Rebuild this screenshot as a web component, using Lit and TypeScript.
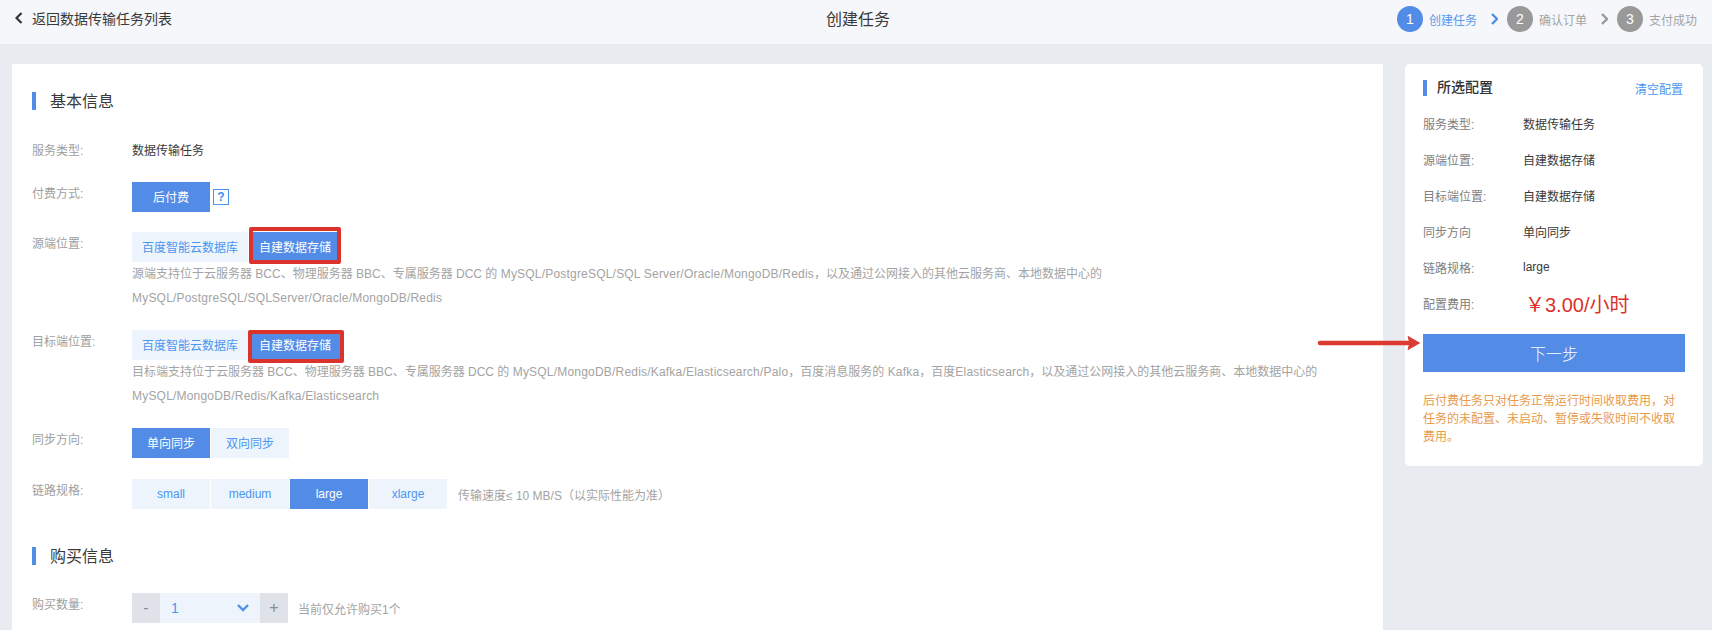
import { LitElement, html, css } from "lit";
import { customElement } from "lit/decorators.js";

@customElement("app-root")
export class AppRoot extends LitElement {
  static styles = css`
    :host { display: block; height: 100vh; overflow: hidden; background: #e8ebf0; color: #3a3a3a;
      font-family: "Liberation Sans", "Noto Sans CJK SC", sans-serif; font-size: 12px; font-weight: 400; }
    * { box-sizing: border-box; }
    .header { height: 44px; background: #f5f7fb; display: grid; grid-template-columns: 1fr auto 1fr; align-items: center; padding: 0 15px 0 15px; }
    .back { display: flex; align-items: center; gap: 9px; font-size: 14px; color: #3a3a3a; margin-top: -8px; }
    .page-title { font-size: 16px; color: #3a3a3a; margin-top: -8px; margin-left: 4px; }
    .steps { display: flex; align-items: center; justify-content: flex-end; margin-top: -6px; }
    .circle { width: 26px; height: 26px; border-radius: 50%; background: #999; color: #fff; font-size: 14px; display: flex; align-items: center; justify-content: center; margin-right: 6px; }
    .step { color: #a3a3a3; display: flex; align-items: center; }
    .step.on { color: #5a9ae8; }
    .step.on .circle { background: #528ce6; }
    .chev { margin: 0 9px 0 14px; display: block; }
    .main { display: flex; gap: 22px; padding: 20px 9px 0 12px; align-items: flex-start; }
    .left { width: 1371px; background: #fff; padding: 28px 20px 0; height: 700px; }
    .sec { display: flex; align-items: center; height: 18px; font-size: 16px; color: #3a3a3a; border-left: 4px solid #528ce6; padding: 0 0 2px 14px; }
    .sec.first { margin-bottom: 31px; }
    .sec.second { margin-top: 38px; margin-bottom: 28px; }
    .row { display: grid; grid-template-columns: 100px 1fr; margin-bottom: 20px; }
    .row.text { margin-bottom: 22px; padding-top: 1px; line-height: 18px; }
    .row.tight { margin-bottom: 21px; }
    .row.last { margin-bottom: 0; }
    .lab { color: #a0a0a0; line-height: 18px; padding-top: 3px; }
    .row.text .lab { padding-top: 0; }
    .ctl { display: flex; align-items: center; gap: 1px; }
    .opt { height: 30px; min-width: 78px; padding: 0 10px 1px; display: flex; align-items: center; justify-content: center; background: #edf4fc; color: #4b96ef; position: relative; }
    .opt.on { background: #528ce6; color: #fff; }
    .mark { position: absolute; border: 4px solid #dc322c; border-radius: 2px; }
    .mark.a { left: 0; right: 0; top: -5px; bottom: -2px; }
    .mark.b { left: -1px; right: -3px; top: 0; bottom: -3px; }
    .help { width: 16px; height: 16px; border: 1px solid #4b96ef; color: #3c8cf0; font-size: 12px; font-weight: 700; display: flex; align-items: center; justify-content: center; margin-left: 2px; }
    .desc { color: #a3a3a3; line-height: 24px; }
    .en { letter-spacing: 0.2px; }
    .hint { color: #a3a3a3; margin-left: 10px; }
    .qbtn { height: 30px; width: 28px; background: #dfe3e9; color: #8c8c8c; display: flex; align-items: center; justify-content: center; font-size: 16px; }
    .qsel { height: 30px; width: 100px; background: #edf4fc; color: #4b96ef; display: flex; align-items: center; justify-content: space-between; padding: 0 11px; font-size: 14px; }
    .qty { gap: 0; }
    .right { width: 298px; height: 402px; background: #fff; border-radius: 5px; padding: 16px 18px 0; position: relative; }
    .rhead { display: flex; justify-content: space-between; align-items: center; height: 16px; padding-right: 2px; }
    .rtitle { border-left: 4px solid #528ce6; padding: 0 0 2px 10px; font-size: 14px; font-weight: 500; color: #333; line-height: 14px; }
    .clear { color: #4b96ef; }
    .rrows { margin-top: 9px; }
    .rrow { display: grid; grid-template-columns: 100px 1fr; height: 36px; align-items: center; }
    .rlab { color: #808080; }
    .price { color: #dc322c; font-size: 20px; padding-left: 2px; }
    .next { margin-top: 13px; height: 38px; background: #528ce6; color: #fff; font-size: 16px; font-weight: 300; display: flex; align-items: center; justify-content: center; width: 262px; }
    .note { margin-top: 20px; color: #e89a4a; line-height: 18px; width: 262px; }
    .arrow { position: absolute; left: 1316px; top: 332px; display: block; }
  `;

  private opt(t: string, on = false, mark = "") {
    return html`<div class="opt ${on ? "on" : ""}">${t}${mark ? html`<span class="mark ${mark}"></span>` : ""}</div>`;
  }

  render() {
    const rows = [["服务类型:", "数据传输任务"], ["源端位置:", "自建数据存储"], ["目标端位置:", "自建数据存储"], ["同步方向", "单向同步"], ["链路规格:", "large"]];
    return html`
      <div class="header">
        <div class="back">
          <svg width="8" height="12" viewBox="0 0 8 12"><path d="M6.5 1 1.5 6l5 5" fill="none" stroke="#333" stroke-width="2.2"/></svg>
          <span>返回数据传输任务列表</span>
        </div>
        <div class="page-title">创建任务</div>
        <div class="steps">
          <div class="step on"><span class="circle">1</span>创建任务</div>
          <svg class="chev" width="7" height="12" viewBox="0 0 7 12"><path d="M1 1l5 5-5 5" fill="none" stroke="#4f8fe8" stroke-width="2.4"/></svg>
          <div class="step"><span class="circle">2</span>确认订单</div>
          <svg class="chev" width="7" height="12" viewBox="0 0 7 12"><path d="M1 1l5 5-5 5" fill="none" stroke="#999" stroke-width="2.4"/></svg>
          <div class="step"><span class="circle">3</span>支付成功</div>
        </div>
      </div>
      <div class="main">
        <div class="left">
          <div class="sec first">基本信息</div>
          <div class="row text"><div class="lab">服务类型:</div><div>数据传输任务</div></div>
          <div class="row"><div class="lab">付费方式:</div><div class="ctl">${this.opt("后付费", true)}<span class="help">?</span></div></div>
          <div class="row"><div class="lab">源端位置:</div><div>
            <div class="ctl">${this.opt("百度智能云数据库")}${this.opt("自建数据存储", true, "a")}</div>
            <div class="desc">源端支持位于云服务器 BCC、物理服务器 BBC、专属服务器 DCC 的 <span class="en">MySQL/PostgreSQL/SQL Server/Oracle/MongoDB/Redis</span>，以及通过公网接入的其他云服务商、本地数据中心的<br><span class="en">MySQL/PostgreSQL/SQLServer/Oracle/MongoDB/Redis</span></div>
          </div></div>
          <div class="row"><div class="lab">目标端位置:</div><div>
            <div class="ctl">${this.opt("百度智能云数据库")}${this.opt("自建数据存储", true, "b")}</div>
            <div class="desc">目标端支持位于云服务器 BCC、物理服务器 BBC、专属服务器 DCC 的 <span class="en">MySQL/MongoDB/Redis/Kafka/Elasticsearch/Palo</span>，百度消息服务的 <span class="en">Kafka</span>，百度<span class="en">Elasticsearch</span>，以及通过公网接入的其他云服务商、本地数据中心的<br><span class="en">MySQL/MongoDB/Redis/Kafka/Elasticsearch</span></div>
          </div></div>
          <div class="row tight"><div class="lab">同步方向:</div><div class="ctl">${this.opt("单向同步", true)}${this.opt("双向同步")}</div></div>
          <div class="row last"><div class="lab">链路规格:</div><div class="ctl">${this.opt("small")}${this.opt("medium")}${this.opt("large", true)}${this.opt("xlarge")}<span class="hint">传输速度≤ 10 MB/S（以实际性能为准）</span></div></div>
          <div class="sec second">购买信息</div>
          <div class="row last"><div class="lab">购买数量:</div><div class="ctl qty">
            <span class="qbtn">-</span>
            <span class="qsel">1<svg width="12" height="8" viewBox="0 0 12 8"><path d="M1 1l5 5 5-5" fill="none" stroke="#4f8fe8" stroke-width="2.4"/></svg></span>
            <span class="qbtn">+</span>
            <span class="hint">当前仅允许购买1个</span>
          </div></div>
        </div>
        <div class="right">
          <div class="rhead"><div class="rtitle">所选配置</div><div class="clear">清空配置</div></div>
          <div class="rrows">
            ${rows.map((r) => html`<div class="rrow"><div class="rlab">${r[0]}</div><div>${r[1]}</div></div>`)}
            <div class="rrow"><div class="rlab">配置费用:</div><div class="price">￥3.00/小时</div></div>
          </div>
          <div class="next">下一步</div>
          <div class="note">后付费任务只对任务正常运行时间收取费用，对任务的未配置、未启动、暂停或失败时间不收取费用。</div>
        </div>
      </div>
      <svg class="arrow" width="106" height="22" viewBox="0 0 106 22"><path d="M4 11H95" stroke="#dc3a30" stroke-width="4.5" stroke-linecap="round"/><path d="M92 4.5 103.5 11 92 17.5 94 11z" fill="#dc3a30" stroke="#dc3a30" stroke-linejoin="round"/></svg>
    `;
  }
}
